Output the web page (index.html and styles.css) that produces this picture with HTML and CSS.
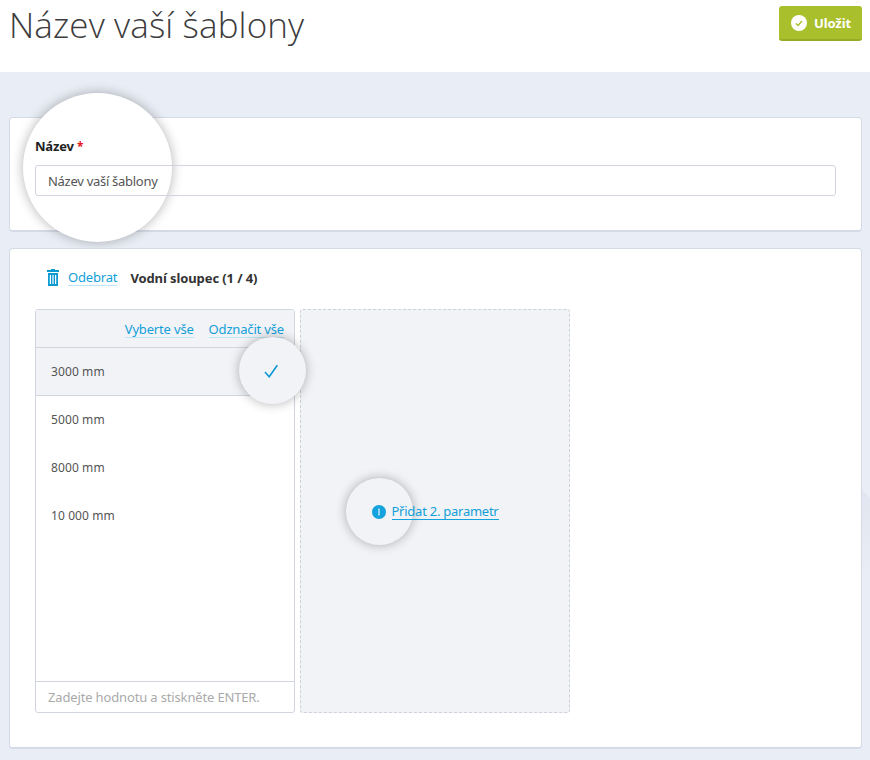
FILE: index.html
```html
<!DOCTYPE html>
<html lang="cs">
<head>
<meta charset="utf-8">
<title>Název vaší šablony</title>
<link rel="stylesheet" href="styles.css">
</head>
<body>
<header class="top">
  <h1 class="title">Název vaší šablony</h1>
  <button class="save" type="button">
    <svg class="save-icon" viewBox="0 0 16 16" width="16" height="16"><circle cx="8" cy="8" r="8" fill="#fff"/><path d="M5 8.400l2.100 2.100L11 6" fill="none" stroke="#a9c02c" stroke-width="1.400"/></svg>
    Uložit
  </button>
</header>
<main class="content">
  <section class="card name-card">
    <span class="spot spot-name"></span>
    <label class="label">Název <span class="req">*</span></label>
    <div class="input">Název vaší šablony</div>
  </section>
  <section class="card col-card">
    <div class="col-head">
      <svg class="trash" viewBox="0 0 12 17" width="12" height="17"><path fill="#0d9ad1" fill-rule="evenodd" d="M4 0h4v1h4v2H0V1h4zM1 4h10v13H1zM2.800 6v9h1.200V6zM5.400 6v9h1.200V6zM8 6v9h1.200V6z"/></svg>
      <a class="link remove">Odebrat</a>
      <strong class="col-title">Vodní sloupec (1 / 4)</strong>
    </div>
    <div class="columns">
      <div class="list">
        <div class="list-actions"><a class="link">Vyberte vše</a><a class="link">Odznačit vše</a></div>
        <div class="row selected">3000 mm
          <span class="spot spot-check"></span>
          <svg class="check" viewBox="0 0 14 14" width="14" height="14"><path d="M1 8l4.200 4.800L13.300 1.300" fill="none" stroke="#0d9ad1" stroke-width="1.600"/></svg>
        </div>
        <div class="row">5000 mm</div>
        <div class="row">8000 mm</div>
        <div class="row">10 000 mm</div>
        <div class="list-input">Zadejte hodnotu a stiskněte ENTER.</div>
      </div>
      <div class="add-box">
        <div class="add">
          <span class="spot spot-add"></span>
          <svg class="info" viewBox="0 0 14 14" width="14" height="14"><circle cx="7" cy="7" r="7" fill="#14a3dc"/><path d="M7 3.500v7" stroke="#fff" stroke-width="1.100"/></svg>
          <a class="link strong">Přidat 2. parametr</a>
        </div>
      </div>
    </div>
  </section>
</main>
<span class="edge-shade"></span>
</body>
</html>
```
FILE: styles.css
```css
* { box-sizing: border-box; }
html, body { margin: 0; height: 100%; }
body {
  position: relative;
  width: 870px;
  height: 760px;
  overflow: hidden;
  background: #e9edf5;
  font-family: "Noto Sans", "Open Sans", sans-serif;
  font-size: 13px;
  color: #444;
}
.top {
  height: 72px;
  background: #fff;
  display: flex;
  justify-content: space-between;
  align-items: flex-start;
  padding: 6px 8px 0 9px;
}
.title {
  margin: 0;
  font-family: "Open Sans", sans-serif;
  font-weight: 300;
  font-size: 35px;
  line-height: 37px;
  letter-spacing: .12px;
  color: #3c3c3c;
}
.save {
  width: 83px;
  height: 35px;
  border: 0;
  border-bottom: 2px solid #97ab25;
  border-radius: 3px;
  background: #a9c02c;
  color: #fff;
  font: 700 13px "Noto Sans", sans-serif;
  letter-spacing: -.1px;
  display: flex;
  align-items: center;
  justify-content: center;
  gap: 7px;
  padding: 0 0 0 1px;
}
.content { padding: 45px 8px 0 9px; display: flex; flex-direction: column; gap: 16px; }
.card {
  position: relative;
  background: #fff;
  border: 1px solid #d5dbe6;
  border-bottom-width: 2px;
  border-radius: 4px;
}
.name-card { height: 115px; padding: 19px 25px 0; }
.spot {
  position: absolute;
  border-radius: 50%;
  background: #fff;
  box-shadow: 0 0 11px rgba(0, 0, 0, .3);
}
.spot-name { left: 13px; top: -25px; width: 149px; height: 149px; box-shadow: 0 0 12px rgba(0, 0, 0, .3); }
.label { position: relative; display: block; height: 18px; font-weight: 700; font-size: 13px; line-height: 18px; color: #222; letter-spacing: -.2px; }
.req { color: #e8141c; font-size: 12px; line-height: 1; }
.input {
  position: relative;
  margin-top: 10px;
  height: 31px;
  border: 1px solid #d0d5df;
  border-radius: 3px;
  padding: 0 12px;
  line-height: 30px;
  font-size: 13px;
  letter-spacing: -.28px;
  color: #555;
}
.col-card { height: 501px; padding: 0 25px; }
.col-head { display: flex; align-items: center; height: 60px; padding: 0 0 3px 12px; }
.trash { margin-right: 9px; }
.link {
  color: #129fd8;
  font-size: 13px;
  letter-spacing: -.17px;
  text-decoration: none;
  border-bottom: 1px solid #bfe6f6;
  line-height: 15px;
}
.col-title { margin-left: 13px; font-weight: 700; font-size: 13px; letter-spacing: -.1px; color: #333; }
.columns { display: flex; gap: 5px; }
.list {
  width: 260px;
  height: 404px;
  border: 1px solid #d0d5df;
  border-radius: 3px;
  display: flex;
  flex-direction: column;
}
.list-actions {
  height: 38px;
  background: #f2f3f7;
  border-bottom: 1px solid #d0d5df;
  display: flex;
  justify-content: flex-end;
  align-items: center;
  gap: 15px;
  padding: 2px 10px 0 0;
}
.row { position: relative; height: 48px; line-height: 47px; padding-left: 15px; font-size: 12px; letter-spacing: .1px; color: #555; }
.row.selected { background: #f2f3f7; border-bottom: 1px solid #d0d5df; }
.spot-check { left: 203px; top: -11px; width: 67px; height: 67px; background: #f2f3f7; }
.check { position: absolute; left: 228px; top: 16px; }
.list-input {
  margin-top: auto;
  height: 31px;
  border-top: 1px solid #d0d5df;
  padding: 0 12px;
  line-height: 30px;
  color: #aaa;
  font-size: 13px;
  letter-spacing: -.15px;
}
.add-box {
  width: 270px;
  height: 404px;
  border: 1px dashed #ccd1da;
  border-radius: 3px;
  background: #f2f3f7;
  display: flex;
  align-items: center;
  justify-content: center;
  padding-top: 2px;
}
.add { position: relative; display: flex; align-items: center; gap: 6px; }
.spot-add { left: -26px; top: -26px; width: 67px; height: 67px; background: #f2f3f7; }
.info { position: relative; }
.link.strong { position: relative; letter-spacing: -.25px; border-bottom-color: #14a3dc; }
.edge-shade {
  position: absolute;
  left: 862px;
  top: 490px;
  width: 8px;
  height: 90px;
  background: linear-gradient(#e2e6f0, #e9edf5);
  clip-path: polygon(0 0, 100% 8px, 100% 100%, 0 100%);
}
```
